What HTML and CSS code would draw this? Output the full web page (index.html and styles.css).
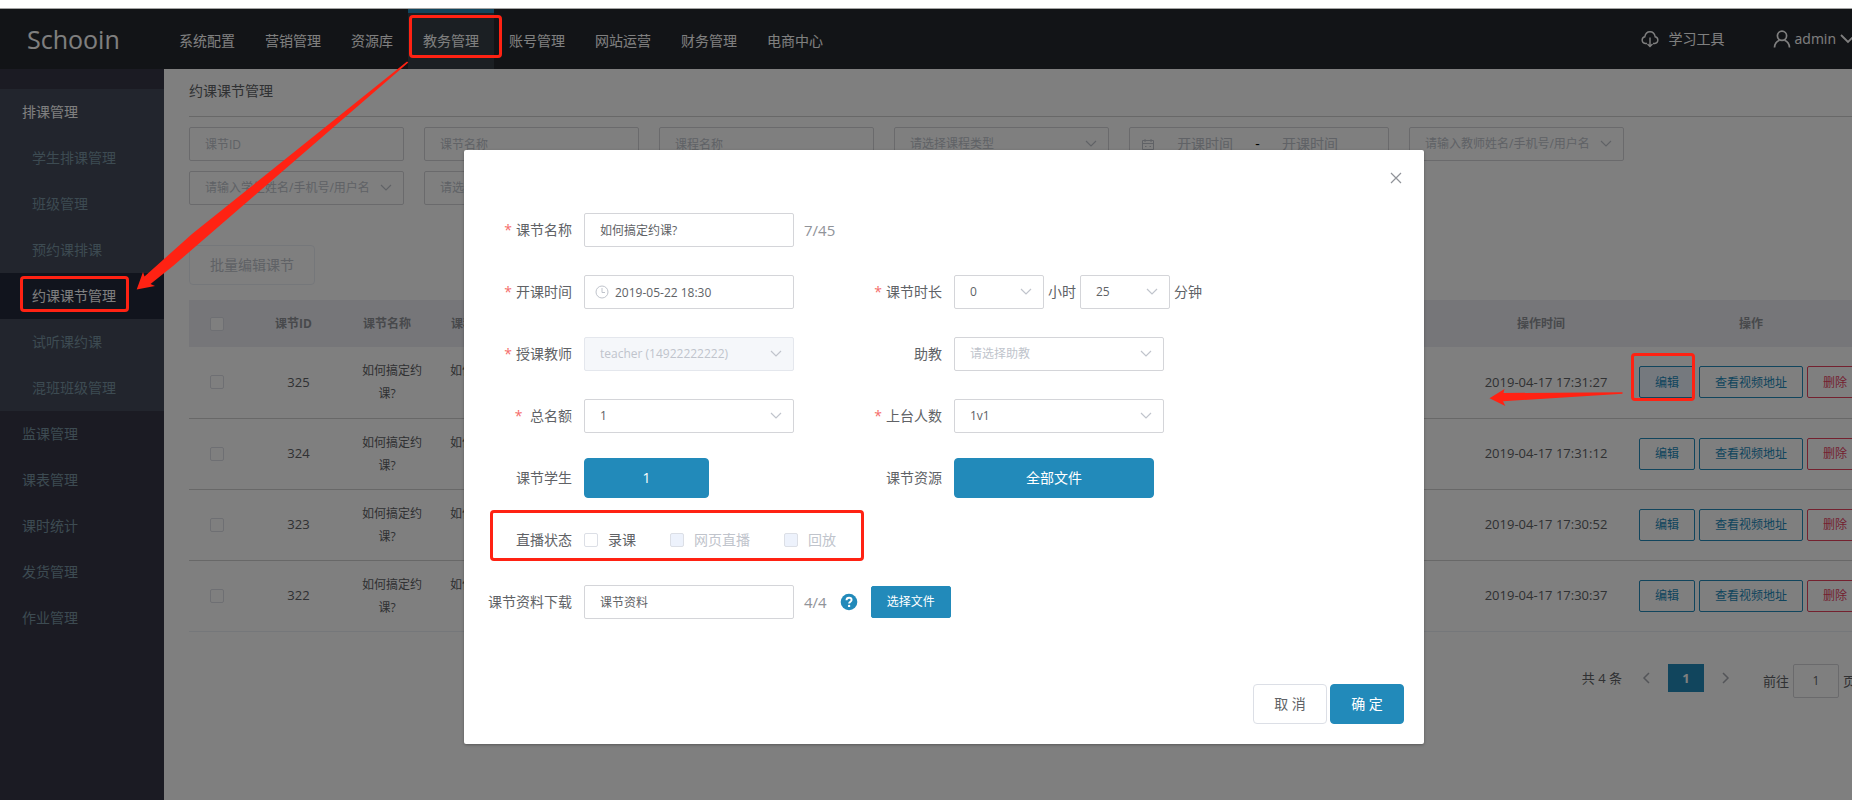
FILE: index.html
```html
<!DOCTYPE html>
<html lang="zh-CN">
<head>
<meta charset="utf-8">
<title>Schooin</title>
<link rel="stylesheet" href="styles.css">
</head>
<body>
<svg class="defs" aria-hidden="true">
  <symbol id="down" viewBox="0 0 12 8"><path d="M1 1l5 5 5-5" fill="none" stroke="currentColor" stroke-width="1.2"/></symbol>
</svg>
<div class="strip"></div>
<div class="app">
  <header class="header">
    <div class="logo">Schooin</div>
    <nav class="menu">
      <a href="#">系统配置</a><a href="#">营销管理</a><a href="#">资源库</a><a href="#" class="on">教务管理</a><a href="#">账号管理</a><a href="#">网站运营</a><a href="#">财务管理</a><a href="#">电商中心</a>
    </nav>
    <div class="account">
      <a href="#" class="tools">
        <svg width="18" height="18" viewBox="0 0 18 18" fill="none" stroke="currentColor" stroke-width="1.4"><path d="M6 13.5H4.200a3.400 3.400 0 0 1-.4-6.700C4.300 3.600 6.300 1.700 9 1.700s4.700 1.900 5.200 5.100a3.400 3.400 0 0 1-.4 6.700H12"/><path d="M9 7.500v9M6.500 14L9 16.500l2.500-2.500"/></svg>
        学习工具</a>
      <a href="#" class="user">
        <svg width="18" height="18" viewBox="0 0 18 18" fill="none" stroke="currentColor" stroke-width="1.700"><circle cx="9" cy="5.800" r="4.600"/><path d="M1.500 17.500c.2-3.700 2.200-6.300 5-7.300M16.500 17.500c-.2-3.700-2.200-6.300-5-7.300"/></svg>
        admin
        <svg width="16" height="10" viewBox="0 0 16 10" fill="none" stroke="currentColor" stroke-width="1.800"><path d="M1 1l7 7 7-7"/></svg></a>
    </div>
  </header>
  <div class="body">
    <aside class="side">
      <div class="group">
        <a href="#" class="title">排课管理</a>
        <a href="#" class="sub">学生排课管理</a>
        <a href="#" class="sub">班级管理</a>
        <a href="#" class="sub">预约课排课</a>
        <a href="#" class="sub on">约课课节管理</a>
        <a href="#" class="sub">试听课约课</a>
        <a href="#" class="sub">混班班级管理</a>
      </div>
      <a href="#">监课管理</a>
      <a href="#">课表管理</a>
      <a href="#">课时统计</a>
      <a href="#">发货管理</a>
      <a href="#">作业管理</a>
    </aside>
    <main class="main">
      <h1>约课课节管理</h1>
      <form class="filters">
        <input class="box" placeholder="课节ID" aria-label="课节ID">
        <input class="box" placeholder="课节名称" aria-label="课节名称">
        <input class="box" placeholder="课程名称" aria-label="课程名称">
        <span class="pick"><select class="box empty" aria-label="课程类型"><option>请选择课程类型</option></select><svg class="arrow"><use href="#down"/></svg></span>
        <div class="box range">
          <svg width="14" height="14" viewBox="0 0 14 14" fill="none" stroke="currentColor"><path d="M1.500 3.500h11v9h-11zM1.500 6.500h11M4 2v3M10 2v3M4 9.500h1.500M8.500 9.500H10"/></svg>
          <input placeholder="开课时间" aria-label="开始时间"><span>-</span><input placeholder="开课时间" aria-label="结束时间">
        </div>
        <span class="pick"><select class="box empty" aria-label="教师"><option>请输入教师姓名/手机号/用户名</option></select><svg class="arrow"><use href="#down"/></svg></span>
        <span class="pick"><select class="box empty" aria-label="学生"><option>请输入学生姓名/手机号/用户名</option></select><svg class="arrow"><use href="#down"/></svg></span>
        <span class="pick"><select class="box empty" aria-label="状态"><option>请选择</option></select><svg class="arrow"><use href="#down"/></svg></span>
      </form>
      <button class="btn batch" disabled>批量编辑课节</button>
      <table class="list">
        <colgroup><col class="c-check"><col class="c-id"><col class="c-name"><col class="c-name"><col><col class="c-time"><col class="c-act"></colgroup>
        <thead><tr><th><input type="checkbox" aria-label="全选"></th><th>课节ID</th><th>课节名称</th><th>课程名称</th><th></th><th>操作时间</th><th>操作</th></tr></thead>
        <tbody>
          <tr><td class="tick"><input type="checkbox" aria-label="325"></td><td class="num">325</td><td>如何搞定约课?</td><td>如何搞定约课?</td><td></td><td class="num">2019-04-17 17:31:27</td><td class="acts"><div><button class="small hover">编辑</button><button class="small">查看视频地址</button><button class="small red">删除</button></div></td></tr>
          <tr><td class="tick"><input type="checkbox" aria-label="324"></td><td class="num">324</td><td>如何搞定约课?</td><td>如何搞定约课?</td><td></td><td class="num">2019-04-17 17:31:12</td><td class="acts"><div><button class="small">编辑</button><button class="small">查看视频地址</button><button class="small red">删除</button></div></td></tr>
          <tr><td class="tick"><input type="checkbox" aria-label="323"></td><td class="num">323</td><td>如何搞定约课?</td><td>如何搞定约课?</td><td></td><td class="num">2019-04-17 17:30:52</td><td class="acts"><div><button class="small">编辑</button><button class="small">查看视频地址</button><button class="small red">删除</button></div></td></tr>
          <tr><td class="tick"><input type="checkbox" aria-label="322"></td><td class="num">322</td><td>如何搞定约课?</td><td>如何搞定约课?</td><td></td><td class="num">2019-04-17 17:30:37</td><td class="acts"><div><button class="small">编辑</button><button class="small">查看视频地址</button><button class="small red">删除</button></div></td></tr>
        </tbody>
      </table>
      <div class="pager">
        <span>共 4 条</span>
        <button class="step" aria-label="上一页"><svg width="8" height="12" viewBox="0 0 8 12"><path d="M7 1L2 6l5 5" fill="none" stroke="currentColor" stroke-width="1.500"/></svg></button>
        <button class="page">1</button>
        <button class="step" aria-label="下一页"><svg width="8" height="12" viewBox="0 0 8 12"><path d="M1 1l5 5-5 5" fill="none" stroke="currentColor" stroke-width="1.500"/></svg></button>
        <label class="jump">前往<input class="box" value="1">页</label>
      </div>
    </main>
  </div>

  <div class="mask">
    <section class="dialog" role="dialog" aria-label="编辑课节">
      <button class="close" aria-label="关闭"><svg width="12" height="12" viewBox="0 0 12 12"><path d="M1 1l10 10M11 1L1 11" stroke="currentColor" stroke-width="1.200"/></svg></button>
      <form class="form">
        <div class="row">
          <div class="field"><label class="label must" for="f-name">课节名称</label><input class="box" id="f-name" value="如何搞定约课?"><span class="count">7/45</span></div>
        </div>
        <div class="row">
          <div class="field"><label class="label must" for="f-time">开课时间</label>
            <span class="pick"><svg class="clock" width="14" height="14" viewBox="0 0 14 14" fill="none" stroke="currentColor"><circle cx="7" cy="7" r="6"/><path d="M7 3v4.500h3"/></svg><input class="box timed" id="f-time" value="2019-05-22 18:30"></span></div>
          <div class="field"><label class="label must" for="f-hour">课节时长</label>
            <span class="pick short"><select class="box" id="f-hour"><option>0</option></select><svg class="arrow"><use href="#down"/></svg></span><span class="unit">小时</span>
            <span class="pick short"><select class="box" aria-label="分钟"><option>25</option></select><svg class="arrow"><use href="#down"/></svg></span><span class="unit">分钟</span></div>
        </div>
        <div class="row">
          <div class="field"><label class="label must" for="f-teacher">授课教师</label><span class="pick"><select class="box" id="f-teacher" disabled><option>teacher (14922222222)</option></select><svg class="arrow"><use href="#down"/></svg></span></div>
          <div class="field"><label class="label" for="f-helper">助教</label><span class="pick"><select class="box empty" id="f-helper"><option>请选择助教</option></select><svg class="arrow"><use href="#down"/></svg></span></div>
        </div>
        <div class="row">
          <div class="field"><label class="label must" for="f-total">&nbsp;总名额</label><span class="pick"><select class="box" id="f-total"><option>1</option></select><svg class="arrow"><use href="#down"/></svg></span></div>
          <div class="field"><label class="label must" for="f-stage">上台人数</label><span class="pick"><select class="box" id="f-stage"><option>1v1</option></select><svg class="arrow"><use href="#down"/></svg></span></div>
        </div>
        <div class="row">
          <div class="field"><span class="label">课节学生</span><button type="button" class="btn blue students">1</button></div>
          <div class="field"><span class="label">课节资源</span><button type="button" class="btn blue files">全部文件</button></div>
        </div>
        <div class="row">
          <div class="field"><span class="label">直播状态</span>
            <div class="checks">
              <label><input type="checkbox">录课</label>
              <label class="off"><input type="checkbox" disabled>网页直播</label>
              <label class="off"><input type="checkbox" disabled>回放</label>
            </div></div>
        </div>
        <div class="row">
          <div class="field"><label class="label" for="f-doc">课节资料下载</label><input class="box" id="f-doc" value="课节资料"><span class="count">4/4</span>
            <svg class="help" width="18" height="18" viewBox="0 0 18 18"><circle cx="9" cy="9" r="8.300" fill="#228aba"/><path d="M6.500 7.200C6.500 5.700 7.600 4.700 9.100 4.700s2.500.9 2.500 2.200c0 1.700-2.500 1.800-2.500 3.700" fill="none" stroke="#fff" stroke-width="1.900"/><circle cx="9.100" cy="12.900" r="1.200" fill="#fff"/></svg>
            <button type="button" class="small solid">选择文件</button></div>
        </div>
      </form>
      <footer class="foot"><button class="btn">取 消</button><button class="btn blue">确 定</button></footer>
    </section>
  </div>

  <div class="mark mark-menu"></div>
  <div class="mark mark-side"></div>
  <div class="mark mark-edit"></div>
  <div class="mark mark-live"></div>
  <svg class="pointers" width="1700" height="420" viewBox="0 9 1700 420" fill="#ff2213">
    <path d="M407 61.500l1.300 1L173 266 150.500 284l4.500 2-18.300 3.500 6.300-17.500 1.500 4.500L192 234z"/>
    <path d="M1489.500 398.300L1504.500 389l-1 4 119-.7v1.500L1503 401.300l2.300 4.700z"/>
  </svg>
</div>
</body>
</html>
```

FILE: styles.css
```css
* { box-sizing: border-box; }
html { overflow: hidden; }
body {
  margin: 0;
  min-height: 100vh;
  overflow: hidden;
  display: flex;
  flex-direction: column;
  font: 14px/20px "Open Sans", "Noto Sans CJK SC", sans-serif;
  color: #606266;
  background: #fff;
}
button, input, select { font: inherit; color: inherit; margin: 0; }
a { color: inherit; text-decoration: none; }
svg { display: block; flex: none; }
.defs { position: absolute; width: 0; height: 0; }

.strip { height: 9px; flex: none; border-bottom: 1px solid #a3a3a3; }
/* the page is a little wider than the window and runs off its right edge */
.app {
  position: relative;
  flex: 1;
  display: flex;
  flex-direction: column;
  margin-right: -36px;
}

.header { display: flex; height: 60px; background: #24282e; color: #fff; }
.logo { width: 164px; padding-left: 27px; font-size: 25px; line-height: 60px; }
.menu { display: flex; }
.menu a { padding: 0 15px; line-height: 56px; border-top: 4px solid transparent; }
.menu .on { background: #363e46; border-top-color: #228aba; }
.account { display: flex; align-items: center; gap: 48px; margin-left: auto; padding-right: 32px; }
.account a { display: flex; align-items: center; }
.tools { gap: 10px; }
.user { gap: 4px; }

.body { flex: 1; display: flex; }
.side { width: 164px; flex: none; padding-top: 20px; background: #363646; color: #7a96a4; }
.side a { display: block; padding-left: 22px; line-height: 46px; }
.side .group { background: #444a5a; }
.side .title { color: #fff; }
.side .sub { padding-left: 32px; }
.side .on { background: #22283a; color: #fff; }

.main { flex: 1; min-width: 0; padding: 0 25px; }
h1 { margin: 0; padding: 12px 0 15px; border-bottom: 1px solid #d0d0d0; font-size: 14px; line-height: 20px; font-weight: 400; }
.filters { display: flex; flex-wrap: wrap; gap: 10px 20px; padding: 10px 200px 40px 0; }

.box {
  width: 215px;
  height: 34px;
  padding: 0 15px;
  border: 1px solid #d4d5d9;
  border-radius: 2px;
  background: #fff;
  font-size: 12px;
  outline: none;
  appearance: none;
}
::placeholder { color: #c0c4cc; opacity: 1; }
.empty { color: #c0c4cc; }
.pick { position: relative; display: flex; }
.arrow { position: absolute; right: 12px; top: 13px; width: 12px; height: 8px; color: #c0c4cc; pointer-events: none; }
.range { display: flex; align-items: center; width: 260px; padding: 0 28px 0 11px; font-size: 14px; color: #c0c4cc; }
.range input { flex: 1; min-width: 0; padding: 0; border: 0; background: none; text-align: center; }
.range span { color: #000; }

.btn {
  min-width: 74px;
  height: 40px;
  padding: 0 20px;
  border: 1px solid #dcdfe6;
  border-radius: 4px;
  background: #fff;
}
.btn.blue { background: #228aba; border-color: #228aba; color: #fff; }
.btn.batch { border-color: #ebeef5; color: #c0c4cc; }
.small {
  height: 32px;
  padding: 0 15px;
  border: 1px solid #228aba;
  border-radius: 2px;
  background: #fff;
  color: #228aba;
  font-size: 12px;
}
.small.hover { background: #eaf2fd; }
.small.red { border-color: #e8425f; color: #e8425f; }
.small.solid { background: #228aba; color: #fff; }

input[type="checkbox"] {
  display: block;
  appearance: none;
  width: 14px;
  height: 14px;
  margin: 0 auto;
  border: 1px solid #dcdfe6;
  border-radius: 2px;
  background: #fff;
}
input[type="checkbox"]:disabled { background: #edf2fc; }

.list { width: 100%; margin-top: 15px; table-layout: fixed; border-collapse: collapse; font-size: 12px; line-height: 23px; text-align: center; }
.c-check { width: 55px; }
.c-id { width: 99px; }
.c-name { width: 88px; }
.c-time { width: 196px; }
.c-act { width: 224px; }
.list th { height: 47px; padding: 0; background: #ecedf2; color: #909399; }
.list td { height: 71px; padding: 0 8px; border-bottom: 1px solid #d0d0d0; text-indent: 10px; }
.list tr:last-child td { border-bottom-color: #ebeef5; }
.list .num { font-size: 13px; }
.list .tick, .list .acts { padding: 0; text-indent: 0; }
.acts div { display: flex; justify-content: space-between; }

.pager { display: flex; align-items: flex-start; padding: 32px 7px 0 0; justify-content: flex-end; font-size: 13px; line-height: 28px; }
.step { display: flex; justify-content: center; align-items: center; width: 28px; height: 28px; padding: 0; border: 0; background: none; color: #a8abb2; }
.pager span { margin-right: 10px; }
.page { width: 36px; height: 28px; margin: 0 8px; padding: 0; border: 0; background: #228aba; color: #fff; font-weight: 700; }
.jump { display: flex; align-items: center; gap: 4px; margin-left: 23px; }
.jump .box { width: 46px; padding: 0; text-align: center; }

.mask { position: absolute; inset: 0; background: rgba(0, 0, 0, .5); display: flex; justify-content: center; align-items: flex-start; padding-top: 141px; }
.dialog { position: relative; width: 960px; padding: 60px 20px 20px; border-radius: 2px; background: #fff; box-shadow: 0 1px 3px rgba(0, 0, 0, .3); }
.close { position: absolute; top: 18px; right: 18px; padding: 4px; border: 0; background: none; color: #909399; }
.form { display: flex; flex-direction: column; gap: 22px; }
.row { display: grid; grid-template-columns: 370px 1fr; height: 40px; }
.field { display: flex; align-items: center; white-space: nowrap; }
.label { width: 100px; padding-right: 12px; text-align: right; flex: none; }
.must::before { content: "*"; margin-right: 4px; color: #f56c6c; }
.form .box { width: 210px; flex: none; }
.form .short .box { width: 90px; }
.form .timed { padding-left: 30px; }
.form select:disabled { background: #f5f7fa; border-color: #e4e7ed; color: #c0c4cc; opacity: 1; }
.clock { position: absolute; left: 11px; top: 10px; color: #c0c4cc; }
.unit { margin: 0 4px; }
.count { margin-left: 10px; font-size: 15px; color: #909399; }
.students { width: 125px; }
.files { width: 200px; }
.checks { display: flex; gap: 34px; }
.checks label { display: flex; align-items: center; gap: 10px; }
.checks .off { color: #c0c4cc; }
.help { margin: 0 13px; }
.foot { display: flex; justify-content: flex-end; gap: 3px; margin-top: 62px; }

.mark { position: absolute; border: 3px solid #ff2213; border-radius: 4px; }
.mark-menu { left: 409px; top: 6px; width: 93px; height: 43px; }
.mark-side { left: 20px; top: 267px; width: 109px; height: 36px; }
.mark-edit { left: 1631px; top: 344px; width: 64px; height: 48px; }
.mark-live { left: 490px; top: 501px; width: 374px; height: 51px; }
.pointers { position: absolute; left: 0; top: 0; pointer-events: none; }
```
